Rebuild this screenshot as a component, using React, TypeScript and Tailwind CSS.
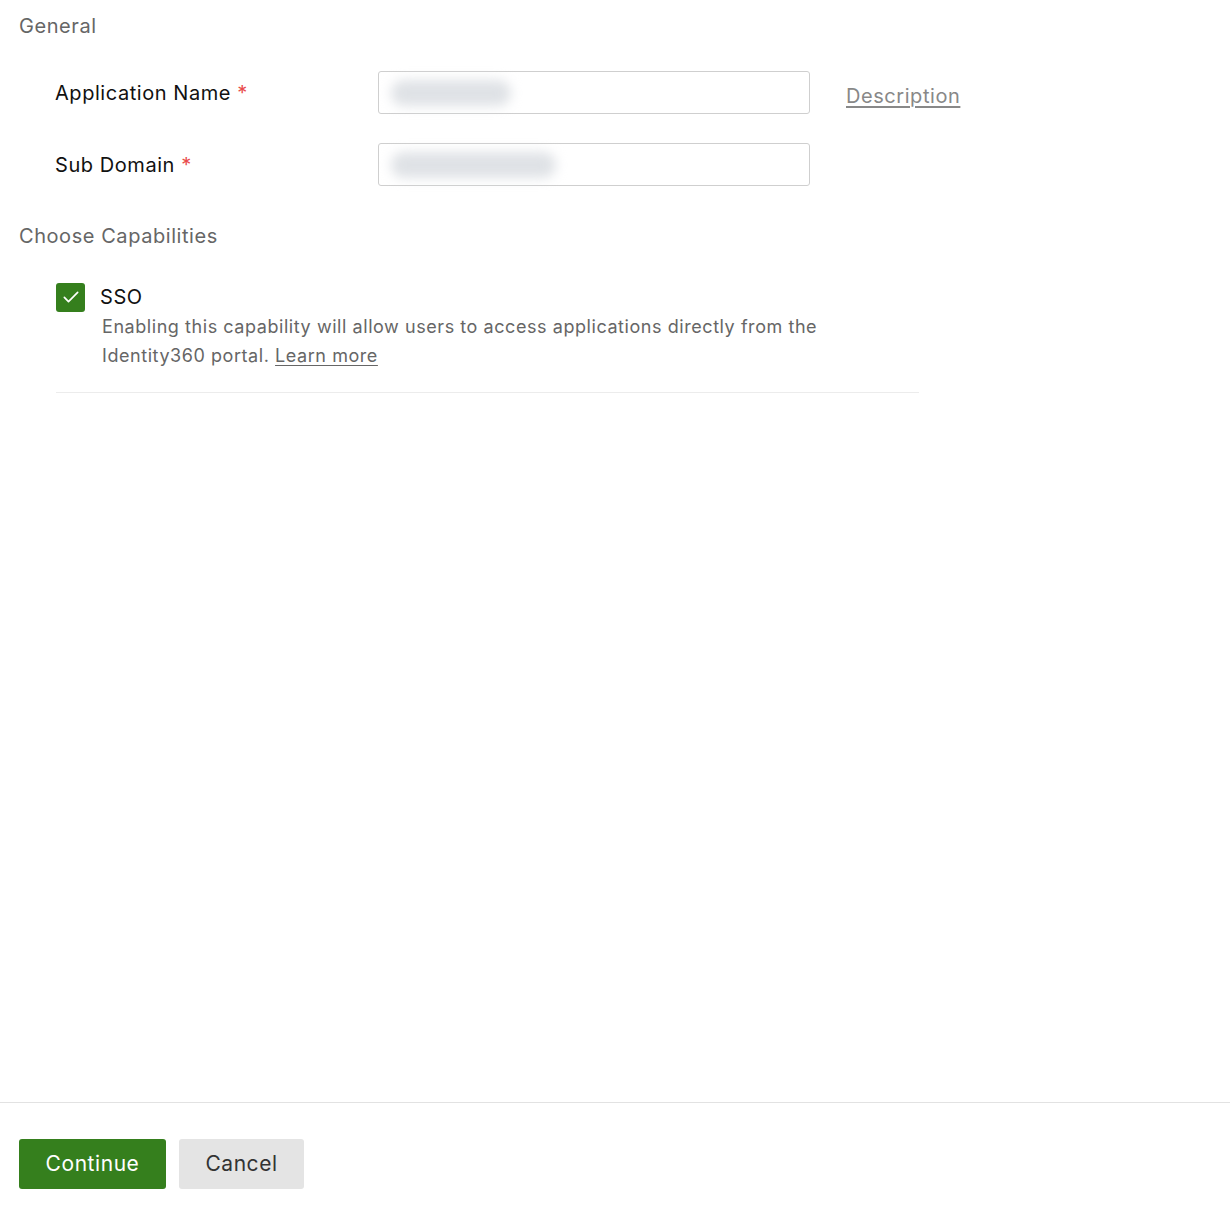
import React from "react";

const Blur = ({ w }: { w: string }) => (
  <div className={`h-[26px] ${w} rounded-full bg-gray-300/70 blur-[6px]`} />
);

const Field = ({ label, blur }: { label: string; blur: string }) => (
  <div className="flex items-center">
    <div className="w-[323px] text-[20px] text-[#111]">
      {label} <span className="text-[#e94b4b]">*</span>
    </div>
    <div className="flex h-[43px] w-[432px] items-center rounded-[3px] border border-[#cfcfcf] bg-white px-3">
      <Blur w={blur} />
    </div>
  </div>
);

export default function App() {
  return (
    <div
      className="flex min-h-[1212px] w-full flex-col bg-white tracking-[0.035em]"
      style={{ fontFamily: "Inter, 'Noto Sans', sans-serif" }}
    >
      <div className="flex-1 px-[19px] pt-[12px]">
        <h2 className="text-[20px] leading-[28px] text-[#666]">General</h2>

        <div className="mt-[31px] flex items-start">
          <div className="flex flex-col gap-[29px] pl-[36px]">
            <Field label="Application Name" blur="w-[120px]" />
            <Field label="Sub Domain" blur="w-[165px]" />
          </div>
          <a className="ml-[36px] mt-[10px] text-[20px] text-[#888] underline underline-offset-[3px]">
            Description
          </a>
        </div>

        <h2 className="mt-[36px] text-[20px] leading-[28px] text-[#666]">Choose Capabilities</h2>

        <div className="ml-[37px] mt-[32px] w-[863px] border-b border-[#ececec] pb-[22px]">
          <div className="flex items-center gap-[15px]">
            <div className="flex h-[29px] w-[29px] items-center justify-center rounded-[3px] bg-[#357f1d]">
              <svg width="20" height="20" viewBox="0 0 24 24" fill="none" stroke="white" strokeWidth="2" strokeLinecap="round" strokeLinejoin="round">
                <path d="M4 12.5l5 5L20 6.5" />
              </svg>
            </div>
            <span className="text-[20px] text-[#111]">SSO</span>
          </div>
          <p className="ml-[46px] text-[18px] leading-[29px] text-[#666]">
            Enabling this capability will allow users to access applications directly from the
            <br />
            Identity360 portal. <a className="underline underline-offset-[3px]">Learn more</a>
          </p>
        </div>
      </div>

      <div className="flex gap-[13px] border-t border-[#e2e2e2] px-[19px] pb-[23px] pt-[36px]">
        <button className="h-[50px] w-[147px] rounded-[3px] bg-[#357f1d] text-[21px] text-white">Continue</button>
        <button className="h-[50px] w-[125px] rounded-[3px] bg-[#e4e4e4] text-[21px] text-[#333]">Cancel</button>
      </div>
    </div>
  );
}
